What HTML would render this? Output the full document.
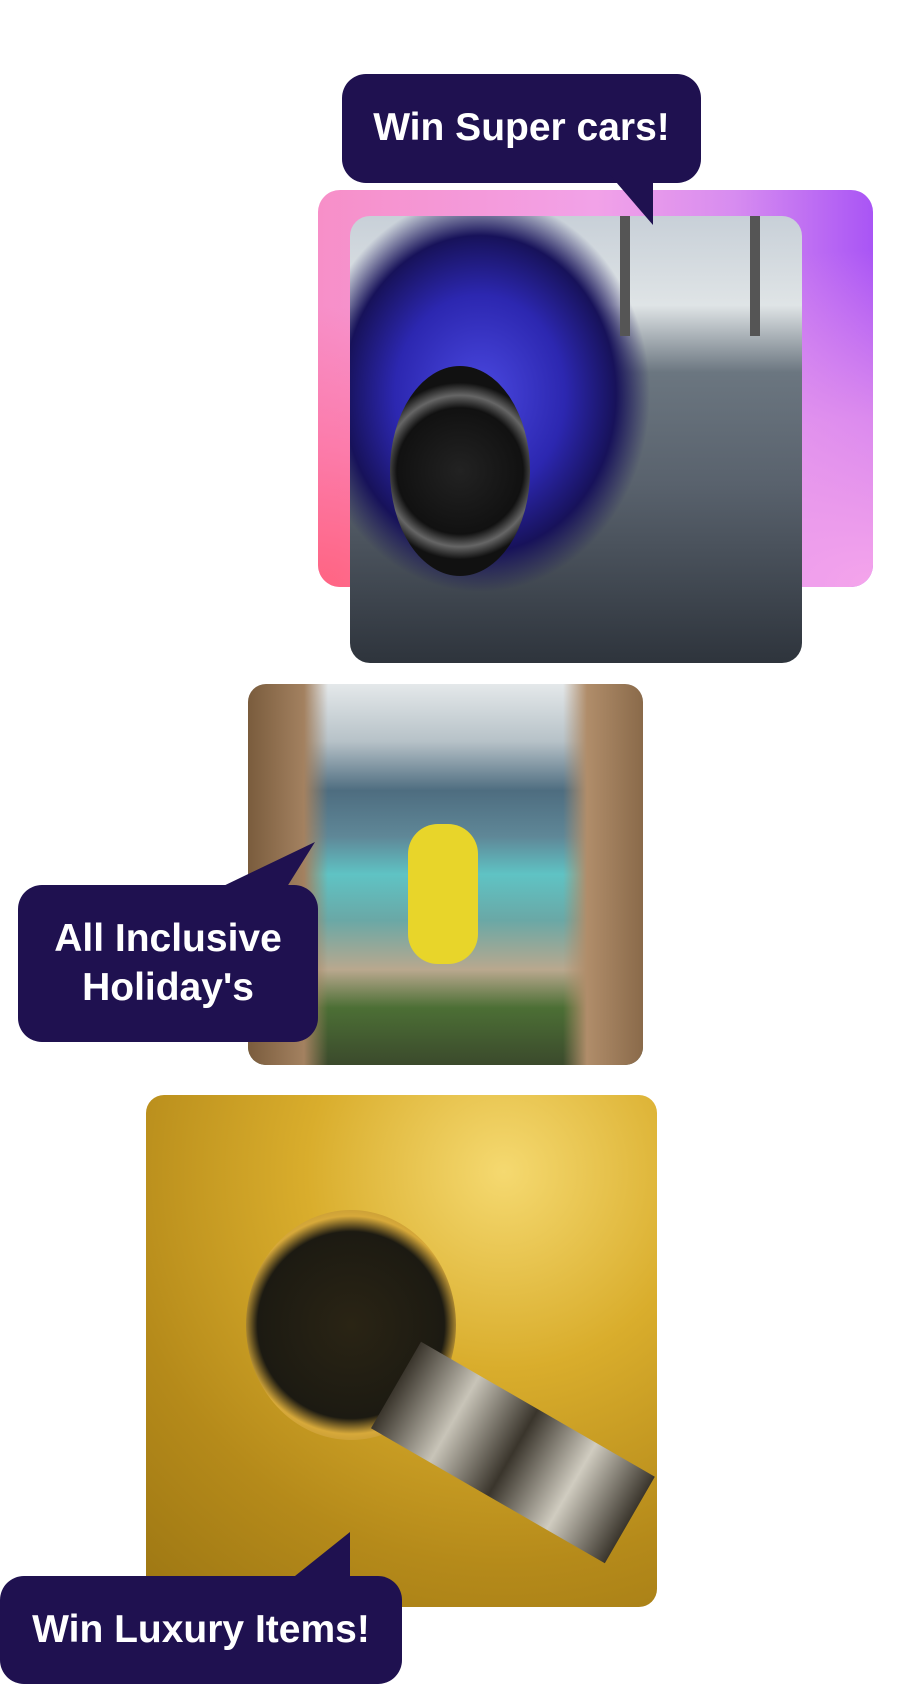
<!DOCTYPE html>
<html><head><style>
html,body{margin:0;padding:0;background:#fff;}
body{width:917px;height:1684px;position:relative;overflow:hidden;font-family:"Liberation Sans",sans-serif;}
.a{position:absolute;}
.bub{position:absolute;background:#1f1150;color:#fff;font-weight:bold;font-size:39px;display:flex;align-items:center;justify-content:center;text-align:center;border-radius:24px;line-height:1.25;}
</style></head><body>
<div class="a" style="left:318px;top:190px;width:555px;height:397px;border-radius:22px;overflow:hidden;background:linear-gradient(90deg,#f78fc8 0%,#f2a2e8 50%,#d78cf0 75%,#a955f5 100%);">
 <div class="a" style="left:0;top:0;width:555px;height:397px;background:radial-gradient(ellipse at 0% 100%,rgba(255,100,130,1) 0%,rgba(255,110,150,.6) 25%,rgba(255,140,190,0) 50%);"></div>
 <div class="a" style="left:0;top:0;width:555px;height:397px;background:radial-gradient(ellipse at 100% 100%,rgba(245,165,235,1) 0%,rgba(240,160,235,.7) 30%,rgba(240,160,235,0) 60%);"></div>
</div>
<div class="a" style="left:350px;top:216px;width:452px;height:447px;border-radius:20px;overflow:hidden;background:linear-gradient(180deg,#c8d0d8 0%,#dfe4e6 20%,#6b7680 35%,#59626d 60%,#2e343c 100%);">
 <div class="a" style="left:-40px;top:-20px;width:340px;height:440px;background:radial-gradient(ellipse closest-side at 50% 45%,#4a48e0 0%,#2c27b0 50%,#17125a 80%,rgba(20,20,40,0) 100%);"></div>
 <div class="a" style="left:40px;top:150px;width:140px;height:210px;border-radius:50%;background:radial-gradient(circle,#222 0,#111 50%,#666 60%,#111 70%);"></div>
 <div class="a" style="left:270px;top:0;width:10px;height:120px;background:#555;"></div>
 <div class="a" style="left:400px;top:0;width:10px;height:120px;background:#555;"></div>
</div>
<div class="bub" style="left:342px;top:74px;width:359px;height:109px;">Win Super cars!</div>
<svg class="a" style="left:600px;top:175px" width="60" height="52"><path d="M10 0 L53 50 L53 0Z" fill="#1f1150"/></svg>

<div class="a" style="left:248px;top:684px;width:395px;height:381px;border-radius:18px;overflow:hidden;background:linear-gradient(180deg,#e4e8ea 0%,#b7c2c8 15%,#4e6d80 28%,#5f8797 40%,#5fc3c4 50%,#6aa8a6 62%,#b9a88e 75%,#4c6f35 85%,#3b4a2c 100%);">
 <div class="a" style="left:0;top:0;width:80px;height:381px;background:linear-gradient(90deg,#7a5c3d,#a38160 70%,rgba(160,130,100,0));"></div>
 <div class="a" style="right:0;top:0;width:80px;height:381px;background:linear-gradient(270deg,#8a6a4a,#b08d6a 70%,rgba(160,130,100,0));"></div>
 <div class="a" style="left:160px;top:140px;width:70px;height:140px;border-radius:30px;background:#e8d52a;"></div>
</div>
<div class="bub" style="left:18px;top:885px;width:300px;height:157px;">All Inclusive<br>Holiday's</div>
<svg class="a" style="left:215px;top:840px" width="105" height="50"><path d="M0 50 L100 2 L70 50Z" fill="#1f1150"/></svg>

<div class="a" style="left:146px;top:1095px;width:511px;height:512px;border-radius:18px;overflow:hidden;background:radial-gradient(circle at 70% 15%,#f5d970 0%,#d9ad2c 35%,#b58a1a 70%,#9c7613 100%);">
 <div class="a" style="left:100px;top:115px;width:210px;height:230px;border-radius:50%;background:radial-gradient(circle,#2a2414 0,#1c1a12 60%,#d7a93a 70%,#8a6a20 100%);"></div>
 <div class="a" style="left:250px;top:240px;width:270px;height:100px;transform:rotate(30deg);transform-origin:left center;background:linear-gradient(90deg,#3a352c,#c8c4b8,#3a352c,#d0ccc0,#3a352c);"></div>
</div>
<div class="bub" style="left:0;top:1576px;width:402px;height:108px;">Win Luxury Items!</div>
<svg class="a" style="left:290px;top:1532px" width="62" height="48"><path d="M0 48 L60 0 L60 48Z" fill="#1f1150"/></svg>
</body></html>
